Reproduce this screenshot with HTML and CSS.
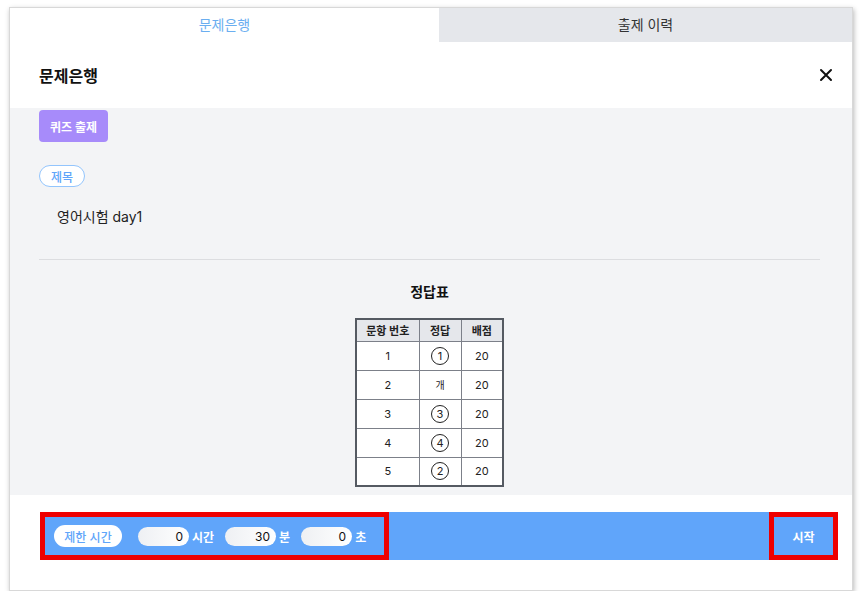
FILE: index.html
```html
<!DOCTYPE html>
<html lang="ko">
<head>
<meta charset="utf-8">
<link rel="stylesheet" href="styles.css">
</head>
<body>
<div class="modal">
  <div class="tabs">
    <div class="tab active">문제은행</div>
    <div class="tab">출제 이력</div>
  </div>
  <div class="header">
    <h2 class="title">문제은행</h2>
    <svg class="close" width="14" height="14" viewBox="0 0 14 14"><path d="M2 2L12 12M12 2L2 12" stroke="#111" stroke-width="2" stroke-linecap="round"/></svg>
  </div>
  <div class="body">
    <button class="quiz-btn">퀴즈 출제</button>
    <span class="label-pill">제목</span>
    <p class="quiz-title">영어시험 day1</p>
    <hr class="divider">
    <h3 class="table-title">정답표</h3>
    <table class="answers">
      <thead>
        <tr><th class="c1">문항 번호</th><th class="c2">정답</th><th class="c3">배점</th></tr>
      </thead>
      <tbody>
        <tr><td>1</td><td><span class="circ">1</span></td><td>20</td></tr>
        <tr><td>2</td><td class="txt">개</td><td>20</td></tr>
        <tr><td>3</td><td><span class="circ">3</span></td><td>20</td></tr>
        <tr><td>4</td><td><span class="circ">4</span></td><td>20</td></tr>
        <tr><td>5</td><td><span class="circ">2</span></td><td>20</td></tr>
      </tbody>
    </table>
  </div>
  <div class="footer">
    <div class="bar">
      <div class="time-group">
        <span class="time-pill">제한 시간</span>
        <span class="field"><span class="num">0</span><span class="unit">시간</span></span>
        <span class="field"><span class="num">30</span><span class="unit">분</span></span>
        <span class="field"><span class="num">0</span><span class="unit">초</span></span>
      </div>
      <button class="start-btn">시작</button>
    </div>
  </div>
</div>
</body>
</html>
```

FILE: styles.css
```css
* { box-sizing: border-box; }
html, body { margin: 0; padding: 0; background: #ffffff; }
body {
  font-family: "Inter", "Noto Sans CJK KR", "Noto Sans", sans-serif;
  color: #111;
  padding: 7px 0 0 9px;
}
.modal {
  width: 844px;
  height: 584px;
  background: #fff;
  border: 1px solid #d8d8d8;
  box-shadow: 1px 2px 5px rgba(0,0,0,0.28);
  display: flex;
  flex-direction: column;
}
.tabs { display: flex; height: 34px; }
.tab {
  flex: 1;
  display: flex;
  align-items: center;
  justify-content: center;
  font-size: 14px;
  color: #333;
  background: #e5e7eb;
  padding-bottom: 3px;
}
.tab.active { background: #fff; color: #6aaef0; flex: 0 0 429px; }
.header {
  height: 66px;
  display: flex;
  align-items: center;
  justify-content: space-between;
  padding: 0 19px 0 29px;
}
.title { margin: 0; font-size: 16px; font-weight: 700; }
.close { display: block; }
.body {
  background: #f3f4f6;
  height: 387px;
  padding: 2px 32px 0 29px;
  display: flex;
  flex-direction: column;
  align-items: flex-start;
}
.quiz-btn {
  font-family: inherit;
  border: none;
  border-radius: 4px;
  background: #a78bfa;
  color: #fff;
  font-size: 12px;
  font-weight: 700;
  width: 69px;
  height: 32px;
  padding: 0;
}
.label-pill {
  margin-top: 23px;
  height: 22px;
  width: 46px;
  border: 1px solid #93c5fd;
  border-radius: 11px;
  background: #fff;
  color: #60a5fa;
  font-size: 12px;
  font-weight: 500;
  display: flex;
  align-items: center;
  justify-content: center;
}
.quiz-title { margin: 20px 0 0 18px; font-size: 14px; line-height: 20px; color: #222; }
.divider {
  align-self: stretch;
  margin: 32px 0 0 0;
  border: none;
  border-top: 1px solid #dcdde0;
}
.table-title {
  align-self: stretch;
  text-align: center;
  margin: 23px 0 0 0;
  font-size: 14px;
  font-weight: 700;
  line-height: 18px;
}
.answers {
  align-self: center;
  margin: 17px 0 0 0;
  border-collapse: collapse;
  border: 2px solid #555a62;
  font-size: 11px;
  color: #222;
  background: #fff;
}
.answers th {
  background: #e5e7eb;
  height: 22px;
  font-weight: 700;
  border: 1px solid #7c8089;
  padding: 0;
}
.answers td {
  height: 29px;
  text-align: center;
  border: 1px solid #7c8089;
  padding: 0;
}
.c1 { width: 63px; }
.c2 { width: 42px; }
.c3 { width: 42px; }
.circ {
  display: inline-flex;
  width: 18px;
  height: 18px;
  border: 1px solid #222;
  border-radius: 50%;
  align-items: center;
  justify-content: center;
  font-size: 11px;
  vertical-align: middle;
}
.txt { font-size: 10px; }
.footer { padding: 17px 14px 0 30px; }
.bar {
  height: 48px;
  background: #60a5fa;
  display: flex;
  justify-content: space-between;
}
.time-group {
  width: 349px;
  height: 48px;
  border: 5px solid #ee0000;
  display: flex;
  align-items: center;
  padding-left: 9px;
}
.time-pill {
  width: 68px;
  height: 22px;
  border-radius: 11px;
  background: #fff;
  color: #60a5fa;
  font-size: 12px;
  font-weight: 500;
  display: flex;
  align-items: center;
  justify-content: center;
  margin-right: 16px;
}
.field { display: flex; align-items: center; margin-right: 11px; }
.num {
  width: 51px;
  height: 19px;
  border-radius: 10px;
  background: linear-gradient(90deg, #eef0f3, #ffffff);
  font-size: 12px;
  color: #111;
  display: flex;
  align-items: center;
  justify-content: flex-end;
  padding-right: 6px;
}
.unit { color: #fff; font-size: 12px; font-weight: 700; margin-left: 3px; }
.start-btn {
  font-family: inherit;
  width: 69px;
  height: 48px;
  border: 5px solid #ee0000;
  background: #60a5fa;
  color: #fff;
  font-size: 12px;
  font-weight: 700;
  padding: 0;
}
```
